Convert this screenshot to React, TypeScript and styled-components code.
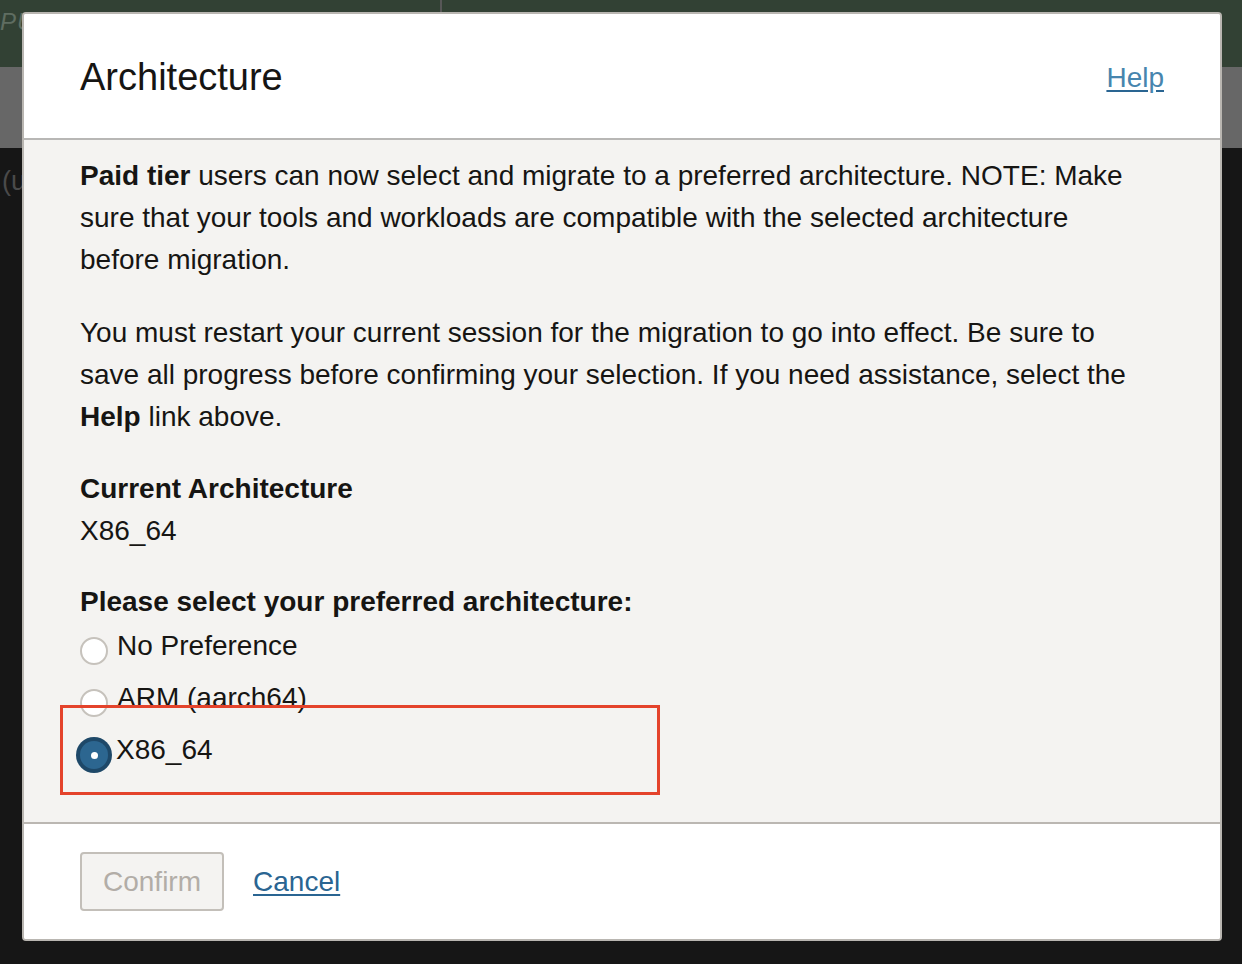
import React from "react";
import styled, { createGlobalStyle } from "styled-components";

const GlobalStyle = createGlobalStyle`
  html, body { margin: 0; padding: 0; background: #161616; }
  body { font-family: "Liberation Sans", Arial, sans-serif; }
  * { box-sizing: border-box; }
`;

const Page = styled.div`
  position: relative;
  width: 1242px;
  height: 964px;
  overflow: hidden;
  background: #161616;
  display: flex;
  flex-direction: column;
`;

const TopBar = styled.div`
  height: 67px;
  background: #324134;
  display: flex;
`;

const TopCell = styled.div`
  width: 442px;
  border-right: 2px solid #575757;
  padding: 8px 0 0 0;
  font-style: italic;
  font-size: 24px;
  color: #5f6d61;
  letter-spacing: 1px;
`;

const Band = styled.div`
  height: 81px;
  background: #676767;
`;

const CodeArea = styled.div`
  flex: 1;
  padding: 18px 0 0 2px;
  font-size: 27px;
  color: #4a4a4a;
`;

const Modal = styled.div`
  position: absolute;
  left: 22px;
  top: 12px;
  width: 1200px;
  height: 929px;
  border: 2px solid #b9b6b1;
  border-radius: 4px;
  background: #fff;
  display: flex;
  flex-direction: column;
  overflow: hidden;
  color: #161513;
`;

const Header = styled.div`
  height: 126px;
  flex: none;
  border-bottom: 2px solid #b8b7b5;
  padding: 0 56px;
  display: flex;
  align-items: center;
  justify-content: space-between;
  background: #fff;
`;

const Title = styled.h1`
  margin: 0;
  font-size: 38px;
  line-height: 38px;
  font-weight: 400;
  color: #161513;
  padding-top: 1px;
`;

const Link = styled.a<{ $light?: boolean }>`
  font-size: 28px;
  line-height: 28px;
  color: ${(p) => (p.$light ? "#4785ae" : "#2a6592")};
  text-decoration: underline;
  text-decoration-color: #2a6592;
  text-underline-offset: 3px;
  cursor: pointer;
  padding-top: ${(p) => (p.$light ? "4px" : "0")};
`;

const Body = styled.div`
  flex: 1;
  background: #f4f3f1;
  padding: 15px 56px 0 56px;
  font-size: 28px;
  line-height: 42px;
`;

const Para = styled.p<{ $gap?: number }>`
  margin: 0 0 ${(p) => p.$gap ?? 30}px 0;
`;

const Label = styled.div`
  font-weight: 700;
`;

const RadioGroup = styled.div`
  display: flex;
  flex-direction: column;
  gap: 10px;
  margin-top: 2px;
`;

const RadioRow = styled.label`
  display: flex;
  align-items: flex-start;
  gap: 9px;
  height: 42px;
  cursor: pointer;
`;

const RadioDot = styled.span<{ $checked?: boolean }>`
  flex: none;
  width: 28px;
  height: 28px;
  margin-top: 12px;
  border-radius: 50%;
  position: relative;
  background: ${(p) => (p.$checked ? "#2c6690" : "#ffffff")};
  border: ${(p) => (p.$checked ? "none" : "2px solid #c6c2bc")};
  box-shadow: ${(p) => (p.$checked ? "0 0 0 4px #1e4868" : "none")};
  &::after {
    content: "";
    display: ${(p) => (p.$checked ? "block" : "none")};
    position: absolute;
    left: 10.5px;
    top: 10.5px;
    width: 7px;
    height: 7px;
    border-radius: 50%;
    background: #fff;
  }
`;

const OptionText = styled.span<{ $checked?: boolean }>`
  margin-left: ${(p) => (p.$checked ? "-1px" : "0")};
`;

const Footer = styled.div`
  height: 117px;
  flex: none;
  border-top: 2px solid #bbb7b2;
  background: #fff;
  padding: 0 56px;
  display: flex;
  align-items: center;
  gap: 29px;
`;

const Button = styled.button`
  height: 59px;
  padding: 0 21px;
  border: 2px solid #c3bfb9;
  border-radius: 4px;
  background: #f4f3f1;
  color: #b2ada7;
  font-family: "Liberation Sans", Arial, sans-serif;
  font-size: 28px;
  cursor: default;
`;

const Annotation = styled.div`
  position: absolute;
  left: 60px;
  top: 705px;
  width: 600px;
  height: 90px;
  border: 3px solid #e4432b;
  pointer-events: none;
`;

const options = [
  { label: "No Preference", checked: false },
  { label: "ARM (aarch64)", checked: false },
  { label: "X86_64", checked: true },
];

export default function App() {
  return (
    <>
      <GlobalStyle />
      <Page>
        <TopBar>
          <TopCell>PUBLIC</TopCell>
        </TopBar>
        <Band />
        <CodeArea>(us-ashburn-1)</CodeArea>

        <Modal>
          <Header>
            <Title>Architecture</Title>
            <Link $light>Help</Link>
          </Header>
          <Body>
            <Para $gap={31}>
              <b>Paid tier</b> users can now select and migrate to a preferred architecture. NOTE: Make
              <br />
              sure that your tools and workloads are compatible with the selected architecture
              <br />
              before migration.
            </Para>
            <Para>
              You must restart your current session for the migration to go into effect. Be sure to
              <br />
              save all progress before confirming your selection. If you need assistance, select the
              <br />
              <b>Help</b> link above.
            </Para>
            <Label>Current Architecture</Label>
            <Para $gap={29}>X86_64</Para>
            <Label>Please select your preferred architecture:</Label>
            <RadioGroup>
              {options.map((o) => (
                <RadioRow key={o.label}>
                  <RadioDot $checked={o.checked} />
                  <OptionText $checked={o.checked}>{o.label}</OptionText>
                </RadioRow>
              ))}
            </RadioGroup>
          </Body>
          <Footer>
            <Button>Confirm</Button>
            <Link>Cancel</Link>
          </Footer>
        </Modal>
        <Annotation />
      </Page>
    </>
  );
}
